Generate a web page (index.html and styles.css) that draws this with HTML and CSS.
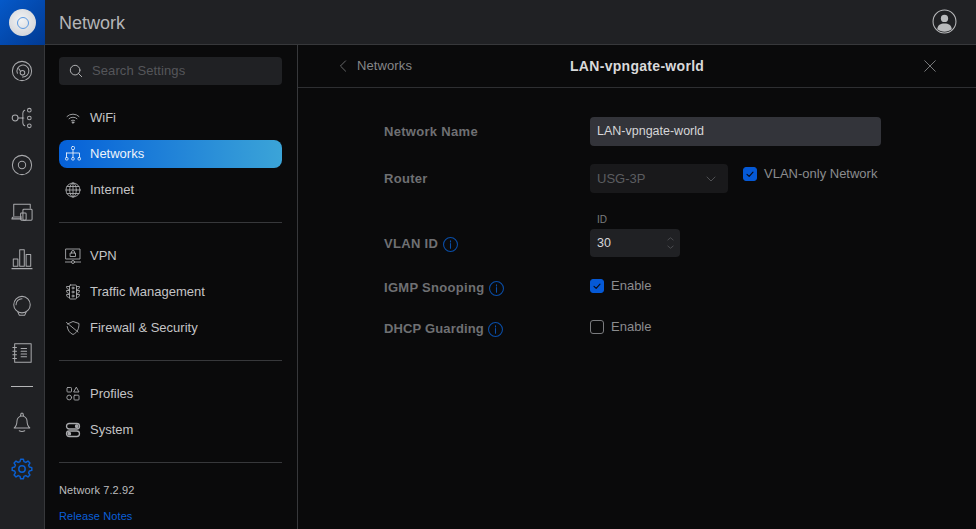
FILE: index.html
```html
<!DOCTYPE html>
<html lang="en">
<head>
<meta charset="utf-8">
<title>Network</title>
<link rel="stylesheet" href="styles.css">
</head>
<body>
<div class="app">
  <aside class="rail">
    <div class="logo"><div class="puck"><div class="ring"></div></div></div>
    <nav class="rail-icons">
      <svg class="ri" viewBox="0 0 24 24"><circle cx="12" cy="12" r="10.500"/><path d="M7 14.500A6.500 6.500 0 1 1 12.500 18.500M8.500 9.500l2 3"/><circle cx="12.500" cy="14" r="2.500"/></svg>
      <svg class="ri" viewBox="0 0 24 24"><circle cx="4.500" cy="12" r="3.200"/><path d="M7.700 12h6.300M15 3.500c-3 1-2 5-2 6.500s-1 2-1 2 1 .5 1 2-1 5.500 2 6.500"/><circle cx="20" cy="3.500" r="2"/><circle cx="20" cy="12" r="2"/><circle cx="20" cy="20.500" r="2"/></svg>
      <svg class="ri" viewBox="0 0 24 24"><circle cx="12" cy="12" r="10.500"/><circle cx="12" cy="12" r="4"/></svg>
      <svg class="ri" viewBox="0 0 24 24"><path d="M3 16V3.500h18V8M1 19.500h10.500M1 19.500c0-1.500 1-2 2-2h8.500"/><rect x="13" y="9" width="10" height="12" rx="1"/><rect x="10.500" y="13" width="6" height="8" rx="1"/></svg>
      <svg class="ri" viewBox="0 0 24 24"><rect x="2.500" y="12" width="5" height="8"/><rect x="9.500" y="2" width="5" height="18"/><rect x="16.500" y="7" width="5" height="13"/><path d="M1 22.500h22"/></svg>
      <svg class="ri" viewBox="0 0 24 24"><circle cx="12" cy="10.500" r="9"/><path d="M7.500 18.500 9 22h6l1.500-3.500M5.500 10.500A6.500 6.500 0 0 1 12 4"/></svg>
      <svg class="ri" viewBox="0 0 24 24"><rect x="4" y="2" width="18" height="20"/><path d="M2 6h4M2 10h4M2 14h4M2 18h4M11 7h6M11 10h6M11 13h6M11 16h6"/></svg>
      <div class="rail-rule"></div>
      <svg class="ri" viewBox="0 0 24 24"><path d="M3.500 18.500c2.500-2 3-4 3-7.500a5.500 5.500 0 0 1 11 0c0 3.500.5 5.500 3 7.500zM10.300 5.500 11 2.500h2l.7 3M9 21.500c2 1 4 1 6 0"/></svg>
      <svg class="ri gear" viewBox="0 0 24 24"><polygon points="20.020,9.850 22.690,10.500 22.690,13.500 20.020,14.150 19.190,16.150 20.630,18.500 18.500,20.630 16.150,19.190 14.150,20.020 13.500,22.690 10.500,22.690 9.850,20.020 7.850,19.190 5.500,20.630 3.370,18.500 4.810,16.150 3.980,14.150 1.310,13.500 1.310,10.500 3.980,9.850 4.810,7.850 3.370,5.500 5.500,3.370 7.850,4.810 9.850,3.980 10.500,1.310 13.500,1.310 14.150,3.980 16.150,4.810 18.500,3.370 20.630,5.500 19.190,7.850"/><circle cx="12" cy="12" r="3.500"/></svg>
    </nav>
  </aside>
  <div class="main">
    <header class="topbar">
      <h1 class="title">Network</h1>
      <svg class="avatar" viewBox="0 0 24 24"><circle class="a-ring" cx="12" cy="12" r="11"/><circle class="a-fill" cx="12" cy="9" r="3.500"/><path class="a-fill" d="M5 19.500c.5-4 3-5.500 7-5.500s6.500 1.500 7 5.500c-2 1.500-4.500 2.300-7 2.300s-5-.8-7-2.300z"/></svg>
    </header>
    <div class="content">
      <aside class="sidebar">
        <div class="search">
          <svg class="search-ico" viewBox="0 0 16 16"><circle cx="7" cy="7" r="5.500"/><path d="m11 11 3.500 3.500"/></svg>
          <span>Search Settings</span>
        </div>
        <ul class="group">
          <li class="item"><svg class="ni" viewBox="0 0 16 16"><path d="M2 6.500a8.500 8.500 0 0 1 12 0M4 8.700a5.800 5.800 0 0 1 8 0M6.200 10.700a2.800 2.800 0 0 1 3.600 0"/><circle class="dot" cx="8" cy="12.500" r=".8"/></svg>WiFi</li>
          <li class="item active"><svg class="ni" viewBox="0 0 16 16"><rect x="6.500" y="0.500" width="3" height="3" rx="1"/><path d="M8 3.500V11M1.500 7h13v4M1.500 7v4"/><rect x="0.500" y="11.500" width="2.500" height="2.500" rx=".8"/><rect x="6.700" y="11.500" width="2.500" height="2.500" rx=".8"/><rect x="13" y="11.500" width="2.500" height="2.500" rx=".8"/></svg>Networks</li>
          <li class="item"><svg class="ni" viewBox="0 0 16 16"><circle cx="8" cy="8" r="7"/><ellipse cx="8" cy="8" rx="3.300" ry="7"/><path d="M8 1v14M1 8h14M2 4.500h12M2 11.500h12"/></svg>Internet</li>
        </ul>
        <ul class="group">
          <li class="item"><svg class="ni" viewBox="0 0 16 16"><rect x="1" y="1" width="14" height="10"/><rect x="5.500" y="5" width="5" height="3.500"/><path d="M6.500 5V4a1.500 1.500 0 0 1 3 0v1M0 14h6M10 14h6"/><circle cx="8" cy="14" r="1.500"/></svg>VPN</li>
          <li class="item"><svg class="ni" viewBox="0 0 16 16"><rect x="4.500" y="1" width="7" height="14" rx="1"/><circle cx="8" cy="4" r="1"/><circle cx="8" cy="8" r="1"/><circle cx="8" cy="12" r="1"/><path d="M4.500 2.500H1.500c0 2 1 3 3 3M4.500 6.500h-3c0 2 1 3 3 3M4.500 10.500h-3c0 2 1 3 3 3M11.500 2.500h3c0 2-1 3-3 3M11.500 6.500h3c0 2-1 3-3 3M11.500 10.500h3c0 2-1 3-3 3"/></svg>Traffic Management</li>
          <li class="item"><svg class="ni" viewBox="0 0 16 16"><path d="M2.500 4 8 1.500 14 3.500c0 5-1.500 9-6 11-3.500-1.500-5.300-4.500-5.800-8M1.500 2.500l11.500 9.500"/></svg>Firewall &amp; Security</li>
        </ul>
        <ul class="group">
          <li class="item"><svg class="ni" viewBox="0 0 16 16"><rect x="2" y="1.500" width="4.500" height="4.500" rx=".8"/><path d="M11.500 1.500 14 6H9z"/><circle cx="4.200" cy="11.500" r="2.400"/><rect x="9" y="9.200" width="5" height="4.800" rx=".8"/></svg>Profiles</li>
          <li class="item"><svg class="ni sys" viewBox="0 0 16 16"><rect x="1.500" y="1.500" width="13" height="5.500" rx="2.700"/><rect x="1.500" y="9" width="13" height="5.500" rx="2.700"/><circle class="dot" cx="11.700" cy="4.200" r="1.200"/><circle class="dot" cx="4.300" cy="11.700" r="1.200"/></svg>System</li>
        </ul>
        <div class="foot">
          <div class="version">Network 7.2.92</div>
          <a class="notes">Release Notes</a>
        </div>
      </aside>
      <section class="panel">
        <div class="panel-head">
          <div class="back">
            <svg class="chev" viewBox="0 0 8 14"><path d="M7 1 1 7l6 6"/></svg>
            <span>Networks</span>
          </div>
          <div class="panel-title">LAN-vpngate-world</div>
          <svg class="close" viewBox="0 0 12 12"><path d="m.7.700 10.600 10.600M11.300.700.700 11.300"/></svg>
        </div>
        <div class="form">
          <div class="row row-name">
            <label class="lbl">Network Name</label>
            <div class="input name-input">LAN-vpngate-world</div>
          </div>
          <div class="row row-router">
            <label class="lbl">Router</label>
            <div class="ctl">
              <div class="input select">USG-3P<svg class="sel-chev" viewBox="0 0 10 6"><path d="m1 1 4 4 4-4"/></svg></div>
              <div class="check vlan"><span class="box on"><svg viewBox="0 0 14 14"><path d="m3.500 7.500 2.500 2.300 4.500-5"/></svg></span>VLAN-only Network</div>
            </div>
          </div>
          <div class="row row-vlan">
            <label class="lbl">VLAN ID <svg class="info" viewBox="0 0 14 14"><circle cx="7" cy="7" r="6.500"/><path d="M7 6v4.500M7 3.500v1.200"/></svg></label>
            <div class="idwrap">
              <div class="id-label">ID</div>
              <div class="input number">30<svg class="spin" viewBox="0 0 8 14"><path d="m1 3.500 3-2.500 3 2.500M1 10.500 4 13l3-2.500"/></svg></div>
            </div>
          </div>
          <div class="row row-igmp">
            <label class="lbl">IGMP Snooping <svg class="info" viewBox="0 0 14 14"><circle cx="7" cy="7" r="6.500"/><path d="M7 6v4.500M7 3.500v1.200"/></svg></label>
            <div class="check"><span class="box on"><svg viewBox="0 0 14 14"><path d="m3.500 7.500 2.500 2.300 4.500-5"/></svg></span>Enable</div>
          </div>
          <div class="row row-dhcp">
            <label class="lbl lbl-tight">DHCP Guarding <svg class="info" viewBox="0 0 14 14"><circle cx="7" cy="7" r="6.500"/><path d="M7 6v4.500M7 3.500v1.200"/></svg></label>
            <div class="check"><span class="box"></span>Enable</div>
          </div>
        </div>
      </section>
    </div>
  </div>
</div>
</body>
</html>
```
FILE: styles.css
```css
* { box-sizing: border-box; }
html, body { margin: 0; height: 100%; }
body { background: #0a0a0b; color: #c4c4c6; font: 13px/16px "Liberation Sans", Arial, sans-serif; overflow: hidden; }
ul { list-style: none; margin: 0; padding: 0; }
svg { display: block; fill: none; stroke-linecap: round; stroke-linejoin: round; }

.app { display: flex; width: 976px; height: 529px; }

.rail { width: 45px; flex: none; background: #202124; border-right: 1px solid #37383b; }
.logo { height: 45px; width: 45px; margin-right: -1px; display: flex; align-items: center; justify-content: center; background: linear-gradient(135deg, #0559c9, #013a93); }
.puck { width: 27px; height: 27px; border-radius: 50%; background: radial-gradient(circle at 45% 40%, #f2f3f4, #c9ccd2); display: flex; align-items: center; justify-content: center; }
.ring { width: 12px; height: 12px; border-radius: 50%; border: 1.500px solid #5c9ae2; }
.rail-icons { display: flex; flex-direction: column; align-items: center; padding-top: 15px; }
.ri { width: 22px; height: 22px; margin-bottom: 25px; stroke: #a9aaad; stroke-width: 1.100; }
.rail-rule { width: 22px; height: 1px; background: #b5b6b8; margin: -3px 0 24px; }
.gear { stroke: #0a5fd0; stroke-width: 1.600; }

.main { flex: 1; display: flex; flex-direction: column; min-width: 0; }
.topbar { height: 45px; flex: none; background: #202124; border-bottom: 1px solid #37383b; display: flex; align-items: center; justify-content: space-between; padding: 0 19px 0 14px; }
.title { margin: 2px 0 0; font-weight: 400; font-size: 18px; color: #b4b5b7; }
.avatar { width: 25px; height: 25px; margin-bottom: 1px; }
.a-ring { stroke: #b9babc; stroke-width: 1; }
.a-fill { fill: #b9babc; }

.content { flex: 1; display: flex; min-height: 0; }

.sidebar { width: 253px; flex: none; border-right: 1px solid #37383b; padding: 12px 15px 0 14px; display: flex; flex-direction: column; }
.search { height: 28px; flex: none; background: #202124; border-radius: 4px; display: flex; align-items: center; color: #55565a; padding-left: 10px; letter-spacing: .1px; }
.search-ico { width: 14px; height: 14px; margin-right: 9px; stroke: #b4b5b7; stroke-width: 1.100; }
.group { padding: 19px 0 18px; border-bottom: 1px solid #37383b; display: flex; flex-direction: column; gap: 8px; }
.item { height: 28px; display: flex; align-items: center; border-radius: 8px; padding-left: 6px; color: #c4c4c6; }
.ni { width: 16px; height: 16px; margin-right: 9px; stroke: #a9aaad; stroke-width: .9; flex: none; }
.ni .dot { fill: #a9aaad; }
.sys { stroke-width: 1.300; }
.active { background: linear-gradient(90deg, #0560d8, #3ba4d8); color: #eef4fb; }
.active .ni { stroke: #e6eefa; }
.foot { padding-top: 19px; font-size: 11px; }
.version { color: #bdbdbf; line-height: 16px; letter-spacing: .1px; }
.notes { display: block; margin-top: 10px; color: #0a5fd8; line-height: 16px; letter-spacing: .1px; }

.panel { flex: 1; min-width: 0; }
.panel-head { height: 43px; border-bottom: 1px solid #2e2f32; display: flex; align-items: center; justify-content: space-between; position: relative; padding: 0 40px 0 41px; }
.back { display: flex; align-items: center; gap: 10px; color: #858688; letter-spacing: .1px; }
.chev { width: 8px; height: 12px; stroke: #77787a; stroke-width: 1; }
.panel-title { position: absolute; left: 272px; top: 13px; color: #d9d9da; font-size: 14px; font-weight: 700; letter-spacing: .3px; }
.close { width: 12px; height: 12px; stroke: #77787a; stroke-width: 1; }

.form { padding: 29px 0 0 86px; }
.row { display: flex; align-items: flex-start; }
.lbl { width: 206px; flex: none; color: #6f7073; font-weight: 700; letter-spacing: .3px; display: flex; align-items: center; gap: 4.500px; white-space: nowrap; }
.lbl-tight { letter-spacing: .15px; }
.input { background: #33343a; border-radius: 4px; height: 29px; display: flex; align-items: center; padding: 0 7px; color: #d6d6d8; font-size: 12.500px; }
.name-input { width: 291px; padding-bottom: 2px; }
.row-name { align-items: center; }
.row-router { margin-top: 18px; }
.row-router .lbl { margin-top: 7px; }
.ctl { display: flex; gap: 15px; }
.select { width: 138px; background: #19191b; color: #5c5d60; justify-content: space-between; padding-right: 12px; font-size: 13px; }
.sel-chev { width: 10px; height: 6px; stroke: #4f5053; stroke-width: 1; }
.check { display: flex; align-items: center; gap: 7px; color: #8b8c8e; }
.vlan { height: 18px; margin-top: 1px; }
.box { width: 14px; height: 14px; border-radius: 3px; border: 1px solid #7a7b7e; flex: none; }
.box.on { background: #0559d6; border-color: #0559d6; }
.box svg { width: 12px; height: 12px; stroke: #0a0a14; stroke-width: 1.300; }

.row-vlan { margin-top: 18px; }
.row-vlan .lbl { margin-top: 25px; }
.idwrap { display: flex; flex-direction: column; }
.id-label { font-size: 10px; line-height: 14px; color: #7b7c7f; padding-left: 7px; height: 18px; padding-top: 2px; }
.number { width: 90px; height: 28px; background: #202124; justify-content: space-between; color: #d6d6d8; padding-right: 6px; }
.spin { width: 7px; height: 14px; stroke: #4f5053; stroke-width: 1; }
.row-igmp { margin-top: 20px; align-items: center; height: 18px; }
.row-dhcp { margin-top: 23px; align-items: center; height: 18px; }
.row-igmp .lbl, .row-dhcp .lbl { margin-top: 4px; }
.info { width: 15px; height: 15px; stroke: #0a4ea8; stroke-width: 1; flex: none; }
```
